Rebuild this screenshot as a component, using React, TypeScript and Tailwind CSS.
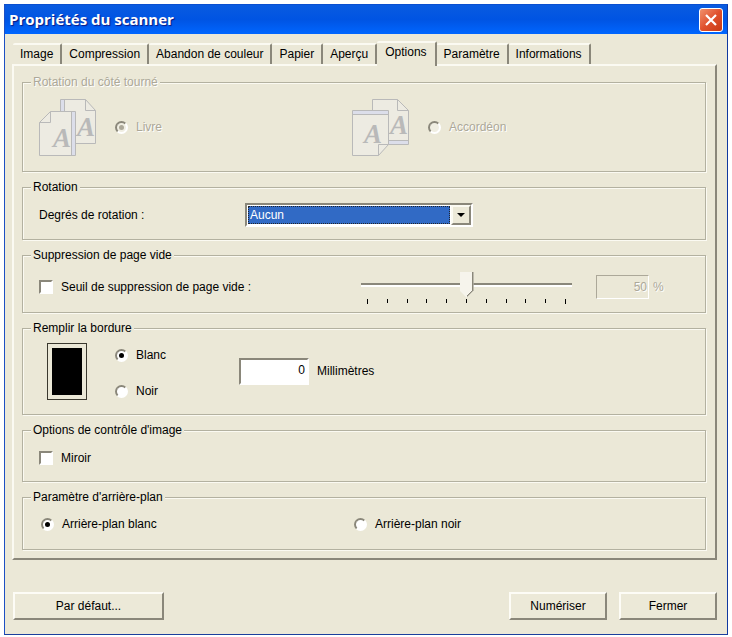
import type { InputHTMLAttributes, ReactNode } from "react";

const tabs = [
  "Image",
  "Compression",
  "Abandon de couleur",
  "Papier",
  "Aperçu",
  "Options",
  "Paramètre",
  "Informations",
];

function Group({ title, disabled, className, children }: { title: string; disabled?: boolean; className: string; children: ReactNode }) {
  return (
    <fieldset
      disabled={disabled}
      className={
        "min-w-0 border border-[#b3b1a0] px-4 shadow-[1px_1px_0_#fbfaf2,inset_1px_1px_0_#fbfaf2] " + className
      }
    >
      <legend
        className={
          "-ml-2 bg-[#ebe8d7] px-[2px] leading-[15px] " +
          (disabled ? "text-[#aca899] [text-shadow:1px_1px_0_#fff]" : "")
        }
      >
        {title}
      </legend>
      {children}
    </fieldset>
  );
}

function Radio({ label, ...props }: { label: string } & InputHTMLAttributes<HTMLInputElement>) {
  return (
    <label className="flex h-4 items-center gap-2 has-disabled:text-[#aca899] has-disabled:[text-shadow:1px_1px_0_#fff]">
      <input
        type="radio"
        {...props}
        className="grid size-[13px] shrink-0 appearance-none place-items-center rounded-full border-2 border-t-[#8a877a] border-r-white border-b-white border-l-[#8a877a] bg-white before:size-[5px] before:rounded-full checked:before:bg-black disabled:bg-[#f0eee2] disabled:checked:before:bg-[#aca899]"
      />
      {label}
    </label>
  );
}

function Checkbox({ label }: { label: string }) {
  return (
    <label className="flex h-4 items-center gap-2">
      <input
        type="checkbox"
        className="size-[14px] shrink-0 appearance-none border-2 border-t-[#8a877a] border-r-white border-b-white border-l-[#8a877a] bg-white checked:bg-[#316ac5]"
      />
      {label}
    </label>
  );
}

function PushButton({ children, className }: { children: ReactNode; className: string }) {
  return (
    <button
      type="button"
      className={
        "h-7 border-2 border-t-[#fdfcf6] border-r-[#8a877a] border-b-[#8a877a] border-l-[#fdfcf6] bg-[#ece9d8] " +
        className
      }
    >
      {children}
    </button>
  );
}

function BookIcon() {
  return (
    <svg width="58" height="58" viewBox="0 0 58 58" fill="none" stroke="#b9b9b9" aria-hidden="true">
      <path d="M21.500 12V.5H46.500L56.500 11.500V44.500H37" fill="#edebe2" />
      <path d="M22 1h3v11h-3z" fill="#dcdeea" stroke="none" />
      <path d="M25.500 1V12M46.500 .5V11.500H56.500" />
      <text x="38" y="37" fontFamily="Liberation Serif, serif" fontStyle="italic" fontWeight="bold" fontSize="27" fill="#b9b9b9" stroke="none">A</text>
      <path d="M.5 23.500L11.500 12.500H36.500V56.500H.5Z" fill="#edebe2" />
      <path d="M33 13h3v43h-3z" fill="#dcdeea" stroke="none" />
      <path d="M32.500 13V56M11.500 12.500V23.500H.5" />
      <text x="14" y="48" fontFamily="Liberation Serif, serif" fontStyle="italic" fontWeight="bold" fontSize="27" fill="#b9b9b9" stroke="none">A</text>
    </svg>
  );
}

function AccordionIcon() {
  return (
    <svg width="58" height="58" viewBox="0 0 58 58" fill="none" stroke="#b9b9b9" aria-hidden="true">
      <path d="M20.500 12V.5H45.500L56.500 11.500V45.500H36" fill="#edebe2" />
      <path d="M36 42h20v3H36z" fill="#dcdeea" stroke="none" />
      <path d="M36 41.500H56M45.500 .5V11.500H56.500" />
      <text x="38" y="35" fontFamily="Liberation Serif, serif" fontStyle="italic" fontWeight="bold" fontSize="27" fill="#b9b9b9" stroke="none">A</text>
      <path d="M.5 11.500H36.500V45.500L26.500 56.500H.5Z" fill="#edebe2" />
      <path d="M1 12h35v3H1z" fill="#dcdeea" stroke="none" />
      <path d="M1 15.500H36M36.500 45.500H26.500V56.500" />
      <text x="12" y="44" fontFamily="Liberation Serif, serif" fontStyle="italic" fontWeight="bold" fontSize="27" fill="#b9b9b9" stroke="none">A</text>
    </svg>
  );
}

function TitleBar() {
  return (
    <header className="flex h-[29px] items-center justify-between bg-linear-to-b from-[#0a5be0] via-[#0054e3] via-50% to-[#0066ff] pr-1 pl-1">
      <h1 className="font-['Open_Sans',sans-serif] text-[15px] font-bold text-white [text-shadow:1px_1px_1px_#0a1883]">
        Propriétés du scanner
      </h1>
      <button
        type="button"
        aria-label="Fermer la fenêtre"
        className="grid size-6 place-items-center rounded-[3px] border border-white bg-linear-to-br from-[#f0906c] via-[#e0512d] to-[#c83a12]"
      >
        <svg width="14" height="14" viewBox="0 0 14 14" stroke="#fff" strokeWidth="2.200" aria-hidden="true">
          <path d="M2 2L12 12M12 2L2 12" />
        </svg>
      </button>
    </header>
  );
}

function TabList() {
  return (
    <div role="tablist" className="flex items-end pl-px">
      {tabs.map((name) => {
        const active = name === "Options";
        return (
          <button
            key={name}
            type="button"
            role="tab"
            aria-selected={active}
            className={
              "rounded-t-[2px] border-t-2 border-r-2 border-t-[#fbfaf2] border-r-[#8a877a] " +
              (active
                ? "relative -mb-[2px] h-[25px] bg-[#ebe8d7] px-2 pb-[4px]"
                : "h-[21px] px-[7px]")
            }
          >
            {name}
          </button>
        );
      })}
    </div>
  );
}

export default function App() {
  return (
    <div className="bg-white px-1 pt-1 pb-[2px] font-['Liberation_Sans',Arial,sans-serif] text-[12px] leading-[15px] text-black">
      <main className="border border-[#1c4fc4] border-t-[#0a4fd0] border-r-[#1038a0] border-b-[#1a3f9c] bg-[#ebe8d7]">
        <TitleBar />
        <div className="px-[7px] pt-[7px] pr-[10px] pb-[14px]">
          <TabList />
          <div
            role="tabpanel"
            aria-label="Options"
            className="flex flex-col gap-2 border-2 border-t-[#fbfaf2] border-r-[#8a877a] border-b-[#8a877a] border-l-[#fbfaf2] px-2 pt-[9px] pr-[9px] pb-2"
          >
            <Group title="Rotation du côté tourné" disabled className="pt-[9px] pb-[14px]">
              <div className="grid grid-cols-[313px_1fr]">
                <div className="flex gap-[18px]">
                  <BookIcon />
                  <div className="pt-5">
                    <Radio name="side" label="Livre" defaultChecked />
                  </div>
                </div>
                <div className="flex gap-[18px]">
                  <AccordionIcon />
                  <div className="pt-5">
                    <Radio name="side" label="Accordéon" />
                  </div>
                </div>
              </div>
            </Group>

            <Group title="Rotation" className="pt-2 pb-3">
              <div className="flex items-center">
                <label htmlFor="degrees" className="w-[206px]">
                  Degrés de rotation :
                </label>
                <div className="relative flex h-6 w-[228px] border-2 border-t-[#8a877a] border-r-white border-b-white border-l-[#8a877a] bg-white p-px">
                  <select
                    id="degrees"
                    className="h-[18px] w-[202px] appearance-none border border-dotted border-[#20242c] bg-[#316ac5] pl-px leading-[15px] text-white outline-none"
                  >
                    <option>Aucun</option>
                  </select>
                  <span className="pointer-events-none absolute top-0 right-0 grid h-5 w-5 place-items-center border-2 border-t-[#fbfaf2] border-r-[#8a877a] border-b-[#8a877a] border-l-[#fbfaf2] bg-[#ece9d8]">
                    <svg width="8" height="4" viewBox="0 0 8 4" aria-hidden="true">
                      <path d="M0 0H8L4 4Z" fill="#000" />
                    </svg>
                  </span>
                </div>
              </div>
            </Group>

            <Group title="Suppression de page vide" className="pt-1 pb-[5px]">
              <div className="flex h-10 items-center">
                <div className="w-[322px]">
                  <Checkbox label="Seuil de suppression de page vide :" />
                </div>
                <div className="w-[211px]">
                  <input
                    type="range"
                    aria-label="Seuil de suppression"
                    defaultValue={50}
                    className="block h-7 w-full appearance-none bg-transparent [&::-webkit-slider-runnable-track]:h-1 [&::-webkit-slider-runnable-track]:border-t-2 [&::-webkit-slider-runnable-track]:border-b-2 [&::-webkit-slider-runnable-track]:border-t-[#8a877a] [&::-webkit-slider-runnable-track]:border-b-white [&::-webkit-slider-thumb]:-mt-[13px] [&::-webkit-slider-thumb]:h-[26px] [&::-webkit-slider-thumb]:w-[14px] [&::-webkit-slider-thumb]:appearance-none [&::-webkit-slider-thumb]:bg-[#f6f4ec] [&::-webkit-slider-thumb]:bg-[linear-gradient(135deg,transparent_30%,#8a877a_30%),linear-gradient(#8a877a,#8a877a)] [&::-webkit-slider-thumb]:bg-[length:7px_7px,2px_19px] [&::-webkit-slider-thumb]:bg-[position:right_bottom,right_top] [&::-webkit-slider-thumb]:bg-no-repeat [&::-webkit-slider-thumb]:[clip-path:polygon(0_0,100%_0,100%_19px,50%_100%,0_19px)]"
                  />
                  <div className="flex h-[5px] justify-between px-[6px]">
                    {Array.from({ length: 11 }, (_, i) => (
                      <span key={i} className={i % 10 === 0 ? "h-[5px] w-px bg-black" : "h-1 w-px bg-black"} />
                    ))}
                  </div>
                </div>
                <label className="ml-6 flex items-center gap-1 text-[#aca899] [text-shadow:1px_1px_0_#fff]">
                  <input
                    disabled
                    defaultValue="50"
                    className="h-6 w-[53px] border border-t-[#aca899] border-r-white border-b-white border-l-[#aca899] bg-transparent pr-px text-right [text-shadow:inherit]"
                  />
                  %
                </label>
              </div>
            </Group>

            <Group title="Remplir la bordure" className="pt-[7px] pb-[14px]">
              <div className="flex">
                <div className="ml-2 h-[57px] w-10 border border-[#3a382e] p-1">
                  <div className="h-full bg-black" />
                </div>
                <div className="ml-7 flex w-[124px] flex-col gap-5 pt-1">
                  <Radio name="border" label="Blanc" defaultChecked />
                  <Radio name="border" label="Noir" />
                </div>
                <label className="flex h-[27px] items-center gap-2 self-center">
                  <input
                    defaultValue="0"
                    className="h-[27px] w-[70px] border-2 border-t-[#8a877a] border-r-white border-b-white border-l-[#8a877a] bg-white pr-[2px] pb-1 text-right outline-none"
                  />
                  Millimètres
                </label>
              </div>
            </Group>

            <Group title="Options de contrôle d'image" className="pt-3 pb-[15px]">
              <Checkbox label="Miroir" />
            </Group>

            <Group title="Paramètre d'arrière-plan" className="pt-[11px] pb-[17px]">
              <div className="grid grid-cols-[313px_1fr] pl-[2px]">
                <Radio name="background" label="Arrière-plan blanc" defaultChecked />
                <Radio name="background" label="Arrière-plan noir" />
              </div>
            </Group>
          </div>

          <footer className="flex gap-3 pt-8 pl-px">
            <PushButton className="mr-auto w-[151px]">Par défaut...</PushButton>
            <PushButton className="w-[98px]">Numériser</PushButton>
            <PushButton className="w-[98px]">Fermer</PushButton>
          </footer>
        </div>
      </main>
    </div>
  );
}
